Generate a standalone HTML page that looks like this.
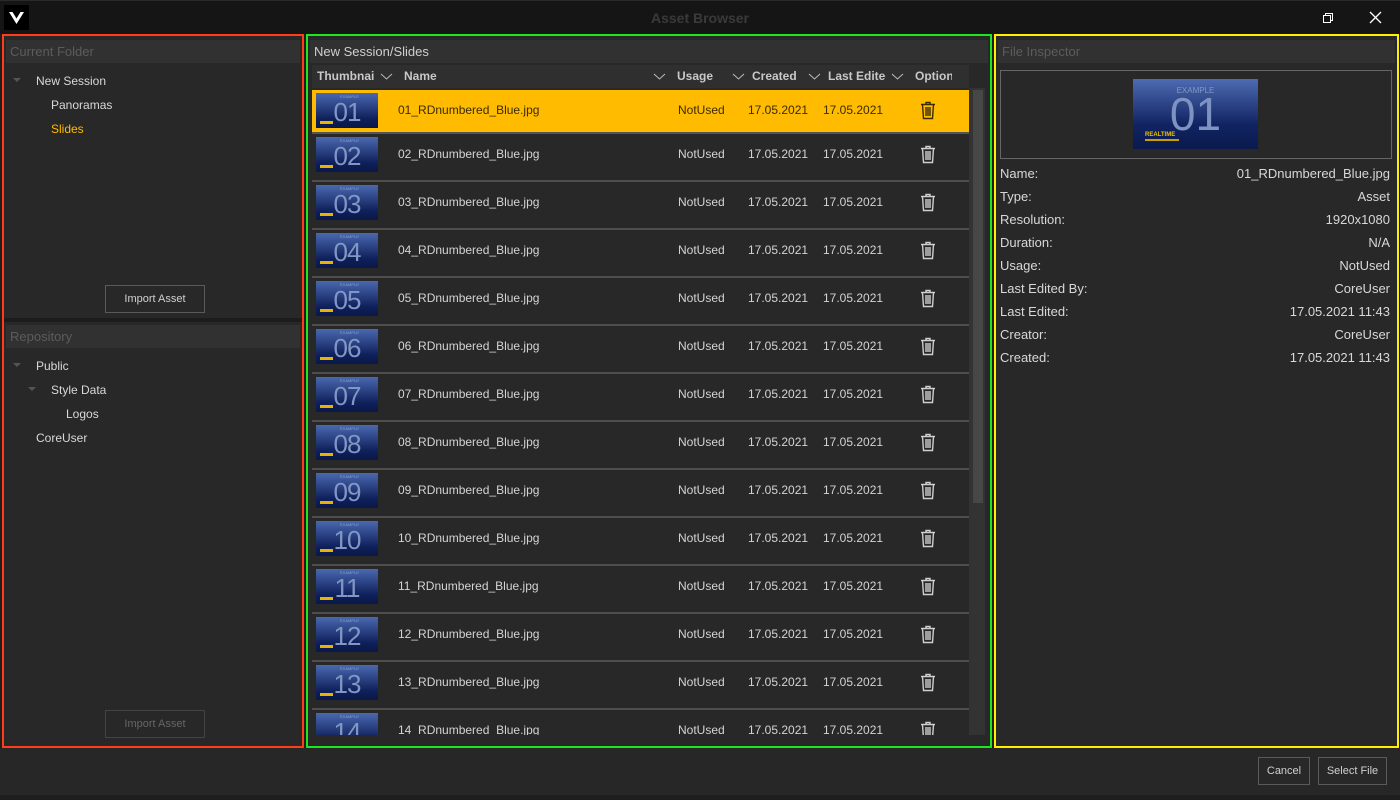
<!DOCTYPE html>
<html><head><meta charset="utf-8"><style>
*{margin:0;padding:0;box-sizing:border-box}
body{width:1400px;height:800px;background:#1e1e1e;font-family:"Liberation Sans",sans-serif;font-size:12px;color:#d8d8d8;position:relative;overflow:hidden}
.a{position:absolute}
.title{left:0;top:0;width:1400px;height:34px;background:#151515;border-top:1px solid #2a2a2a}
.hdr{height:23px;background:#313131;color:#5c5c5c;font-size:13px;line-height:23px;padding-left:4px}
.panel{background:#282828}
.btn{border:1px solid #5a5a5a;color:#d0d0d0;text-align:center;font-size:11px;background:#282828}
.row{position:absolute;left:312px;width:657px;height:48px;border-bottom:2px solid #4e4e4e}
.row .t{position:absolute;left:4px;top:3px;width:62px;height:35px;background:linear-gradient(#4a68b0,#0e1f5a 75%,#0a1848);overflow:hidden}
.row .t b{position:absolute;left:0;width:100%;top:6px;text-align:center;font-weight:normal;font-size:26px;color:#8196c4;letter-spacing:-1px;line-height:26px}
.row .t i{position:absolute;left:24px;top:1px;font-style:normal;font-size:4px;color:#8da0cc}
.row .t u{position:absolute;left:4px;top:28px;width:13px;height:3px;background:#e8b400;text-decoration:none}
.row span{position:absolute;top:13px;font-size:12px;color:#d4d4d4}
.row svg{position:absolute;left:608px;top:11px}
.sel{background:#ffbb00}
.sel span{color:#3a2c00}
.prop{position:absolute;left:1000px;width:390px;font-size:13px;color:#d8d8d8}
.prop em{position:absolute;right:0;font-style:normal}
.ch{position:absolute;top:8px}
</style></head><body>
<div class="a title">
 <div class="a" style="left:4px;top:4px;width:25px;height:25px;background:#000">
  <svg width="25" height="25"><path d="M5 7 L12.5 19 L20 7 L16.5 7 L12.5 13.5 L8.5 7 Z" fill="#fff"/></svg>
 </div>
 <div class="a" style="left:0;width:1400px;top:9px;text-align:center;font-weight:bold;font-size:14px;color:#3a3a3a">Asset Browser</div>
 <svg class="a" style="left:1322px;top:11px" width="12" height="12"><rect x="1.5" y="3.5" width="7" height="7" fill="none" stroke="#fff"/><path d="M3.5 3.5V1.5h7v7h-2" fill="none" stroke="#fff"/></svg>
 <svg class="a" style="left:1369px;top:10px" width="13" height="13"><path d="M1 1L12 12M12 1L1 12" stroke="#fff" stroke-width="1.3"/></svg>
</div>
<div class="a" style="left:0;top:748px;width:1400px;height:47px;background:#272727"></div>
<div class="a btn" style="left:1258px;top:757px;width:52px;height:28px;line-height:26px">Cancel</div>
<div class="a btn" style="left:1318px;top:757px;width:69px;height:28px;line-height:26px">Select File</div>

<div class="a panel" style="left:2px;top:34px;width:302px;height:714px;border:2px solid #ff3d1a">
 <div class="a hdr" style="left:2px;top:4px;width:294px">Current Folder</div>
 <div class="a" style="left:9px;top:42px;border:4px solid transparent;border-top:4px solid #555"></div>
 <div class="a" style="left:32px;top:38px;font-size:12px">New Session</div>
 <div class="a" style="left:47px;top:62px">Panoramas</div>
 <div class="a" style="left:47px;top:86px;color:#ffbb00">Slides</div>
 <div class="a btn" style="left:101px;top:249px;width:100px;height:28px;line-height:26px">Import Asset</div>
 <div class="a" style="left:0;top:282px;width:298px;height:4px;background:#1c1c1c"></div>
 <div class="a hdr" style="left:2px;top:289px;width:294px">Repository</div>
 <div class="a" style="left:9px;top:327px;border:4px solid transparent;border-top:4px solid #555"></div>
 <div class="a" style="left:32px;top:323px">Public</div>
 <div class="a" style="left:24px;top:351px;border:4px solid transparent;border-top:4px solid #555"></div>
 <div class="a" style="left:47px;top:347px">Style Data</div>
 <div class="a" style="left:62px;top:371px">Logos</div>
 <div class="a" style="left:32px;top:395px">CoreUser</div>
 <div class="a btn" style="left:101px;top:674px;width:100px;height:28px;line-height:26px;color:#666;border-color:#444">Import Asset</div>
</div>

<div class="a panel" style="left:306px;top:34px;width:686px;height:714px;border:2px solid #1ee61e"></div>
<div class="a hdr" style="left:310px;top:40px;width:678px;color:#cfcfcf;padding-left:4px">New Session/Slides</div>
<div class="a" style="left:312px;top:65px;width:657px;height:23px;background:#2f2f2f;color:#c8c8c8;font-weight:bold;font-size:12px;line-height:23px">
 <span class="a" style="left:5px">Thumbnai</span><svg class="ch" style="left:68px" width="13" height="7"><path d="M1 1l5.5 5 5.5-5" fill="none" stroke="#bbb"/></svg>
 <span class="a" style="left:92px">Name</span><svg class="ch" style="left:341px" width="13" height="7"><path d="M1 1l5.5 5 5.5-5" fill="none" stroke="#bbb"/></svg>
 <span class="a" style="left:365px">Usage</span><svg class="ch" style="left:420px" width="13" height="7"><path d="M1 1l5.5 5 5.5-5" fill="none" stroke="#bbb"/></svg>
 <span class="a" style="left:440px">Created</span><svg class="ch" style="left:496px" width="13" height="7"><path d="M1 1l5.5 5 5.5-5" fill="none" stroke="#bbb"/></svg>
 <span class="a" style="left:516px;width:58px;overflow:hidden;white-space:nowrap">Last Edited</span><svg class="ch" style="left:579px" width="13" height="7"><path d="M1 1l5.5 5 5.5-5" fill="none" stroke="#bbb"/></svg>
 <span class="a" style="left:603px;width:37px;overflow:hidden;white-space:nowrap">Options</span>
</div>
<div class="a" style="left:969px;top:88px;width:16px;height:647px;background:#333"></div>
<div class="a" style="left:973px;top:90px;width:10px;height:413px;background:#474747"></div>
<div class="a" style="left:312px;top:90px;width:657px;height:645px;overflow:hidden">
<div style="position:relative;left:-312px;top:-90px">
<div class="row sel" style="top:90px;border-bottom-color:#555;height:44px"><div class="t"><i>EXAMPLE</i><b>01</b><u></u></div><span style="left:86px">01_RDnumbered_Blue.jpg</span><span style="left:366px">NotUsed</span><span style="left:436px">17.05.2021</span><span style="left:511px">17.05.2021</span><svg width="16" height="19"><path d="M1 3.5h14M6 3.5V1.5h4v2M2.5 3.5l1 14h9l1-14M6 6v9M8 6v9M10 6v9" fill="none" stroke="#3a2c00" stroke-width="1.4"/></svg></div>
<div class="row" style="top:134px"><div class="t"><i>EXAMPLE</i><b>02</b><u></u></div><span style="left:86px">02_RDnumbered_Blue.jpg</span><span style="left:366px">NotUsed</span><span style="left:436px">17.05.2021</span><span style="left:511px">17.05.2021</span><svg width="16" height="19"><path d="M1 3.5h14M6 3.5V1.5h4v2M2.5 3.5l1 14h9l1-14M6 6v9M8 6v9M10 6v9" fill="none" stroke="#cfcfcf" stroke-width="1.4"/></svg></div>
<div class="row" style="top:182px"><div class="t"><i>EXAMPLE</i><b>03</b><u></u></div><span style="left:86px">03_RDnumbered_Blue.jpg</span><span style="left:366px">NotUsed</span><span style="left:436px">17.05.2021</span><span style="left:511px">17.05.2021</span><svg width="16" height="19"><path d="M1 3.5h14M6 3.5V1.5h4v2M2.5 3.5l1 14h9l1-14M6 6v9M8 6v9M10 6v9" fill="none" stroke="#cfcfcf" stroke-width="1.4"/></svg></div>
<div class="row" style="top:230px"><div class="t"><i>EXAMPLE</i><b>04</b><u></u></div><span style="left:86px">04_RDnumbered_Blue.jpg</span><span style="left:366px">NotUsed</span><span style="left:436px">17.05.2021</span><span style="left:511px">17.05.2021</span><svg width="16" height="19"><path d="M1 3.5h14M6 3.5V1.5h4v2M2.5 3.5l1 14h9l1-14M6 6v9M8 6v9M10 6v9" fill="none" stroke="#cfcfcf" stroke-width="1.4"/></svg></div>
<div class="row" style="top:278px"><div class="t"><i>EXAMPLE</i><b>05</b><u></u></div><span style="left:86px">05_RDnumbered_Blue.jpg</span><span style="left:366px">NotUsed</span><span style="left:436px">17.05.2021</span><span style="left:511px">17.05.2021</span><svg width="16" height="19"><path d="M1 3.5h14M6 3.5V1.5h4v2M2.5 3.5l1 14h9l1-14M6 6v9M8 6v9M10 6v9" fill="none" stroke="#cfcfcf" stroke-width="1.4"/></svg></div>
<div class="row" style="top:326px"><div class="t"><i>EXAMPLE</i><b>06</b><u></u></div><span style="left:86px">06_RDnumbered_Blue.jpg</span><span style="left:366px">NotUsed</span><span style="left:436px">17.05.2021</span><span style="left:511px">17.05.2021</span><svg width="16" height="19"><path d="M1 3.5h14M6 3.5V1.5h4v2M2.5 3.5l1 14h9l1-14M6 6v9M8 6v9M10 6v9" fill="none" stroke="#cfcfcf" stroke-width="1.4"/></svg></div>
<div class="row" style="top:374px"><div class="t"><i>EXAMPLE</i><b>07</b><u></u></div><span style="left:86px">07_RDnumbered_Blue.jpg</span><span style="left:366px">NotUsed</span><span style="left:436px">17.05.2021</span><span style="left:511px">17.05.2021</span><svg width="16" height="19"><path d="M1 3.5h14M6 3.5V1.5h4v2M2.5 3.5l1 14h9l1-14M6 6v9M8 6v9M10 6v9" fill="none" stroke="#cfcfcf" stroke-width="1.4"/></svg></div>
<div class="row" style="top:422px"><div class="t"><i>EXAMPLE</i><b>08</b><u></u></div><span style="left:86px">08_RDnumbered_Blue.jpg</span><span style="left:366px">NotUsed</span><span style="left:436px">17.05.2021</span><span style="left:511px">17.05.2021</span><svg width="16" height="19"><path d="M1 3.5h14M6 3.5V1.5h4v2M2.5 3.5l1 14h9l1-14M6 6v9M8 6v9M10 6v9" fill="none" stroke="#cfcfcf" stroke-width="1.4"/></svg></div>
<div class="row" style="top:470px"><div class="t"><i>EXAMPLE</i><b>09</b><u></u></div><span style="left:86px">09_RDnumbered_Blue.jpg</span><span style="left:366px">NotUsed</span><span style="left:436px">17.05.2021</span><span style="left:511px">17.05.2021</span><svg width="16" height="19"><path d="M1 3.5h14M6 3.5V1.5h4v2M2.5 3.5l1 14h9l1-14M6 6v9M8 6v9M10 6v9" fill="none" stroke="#cfcfcf" stroke-width="1.4"/></svg></div>
<div class="row" style="top:518px"><div class="t"><i>EXAMPLE</i><b>10</b><u></u></div><span style="left:86px">10_RDnumbered_Blue.jpg</span><span style="left:366px">NotUsed</span><span style="left:436px">17.05.2021</span><span style="left:511px">17.05.2021</span><svg width="16" height="19"><path d="M1 3.5h14M6 3.5V1.5h4v2M2.5 3.5l1 14h9l1-14M6 6v9M8 6v9M10 6v9" fill="none" stroke="#cfcfcf" stroke-width="1.4"/></svg></div>
<div class="row" style="top:566px"><div class="t"><i>EXAMPLE</i><b>11</b><u></u></div><span style="left:86px">11_RDnumbered_Blue.jpg</span><span style="left:366px">NotUsed</span><span style="left:436px">17.05.2021</span><span style="left:511px">17.05.2021</span><svg width="16" height="19"><path d="M1 3.5h14M6 3.5V1.5h4v2M2.5 3.5l1 14h9l1-14M6 6v9M8 6v9M10 6v9" fill="none" stroke="#cfcfcf" stroke-width="1.4"/></svg></div>
<div class="row" style="top:614px"><div class="t"><i>EXAMPLE</i><b>12</b><u></u></div><span style="left:86px">12_RDnumbered_Blue.jpg</span><span style="left:366px">NotUsed</span><span style="left:436px">17.05.2021</span><span style="left:511px">17.05.2021</span><svg width="16" height="19"><path d="M1 3.5h14M6 3.5V1.5h4v2M2.5 3.5l1 14h9l1-14M6 6v9M8 6v9M10 6v9" fill="none" stroke="#cfcfcf" stroke-width="1.4"/></svg></div>
<div class="row" style="top:662px"><div class="t"><i>EXAMPLE</i><b>13</b><u></u></div><span style="left:86px">13_RDnumbered_Blue.jpg</span><span style="left:366px">NotUsed</span><span style="left:436px">17.05.2021</span><span style="left:511px">17.05.2021</span><svg width="16" height="19"><path d="M1 3.5h14M6 3.5V1.5h4v2M2.5 3.5l1 14h9l1-14M6 6v9M8 6v9M10 6v9" fill="none" stroke="#cfcfcf" stroke-width="1.4"/></svg></div>
<div class="row" style="top:710px"><div class="t"><i>EXAMPLE</i><b>14</b><u></u></div><span style="left:86px">14_RDnumbered_Blue.jpg</span><span style="left:366px">NotUsed</span><span style="left:436px">17.05.2021</span><span style="left:511px">17.05.2021</span><svg width="16" height="19"><path d="M1 3.5h14M6 3.5V1.5h4v2M2.5 3.5l1 14h9l1-14M6 6v9M8 6v9M10 6v9" fill="none" stroke="#cfcfcf" stroke-width="1.4"/></svg></div>
</div></div>

<div class="a panel" style="left:994px;top:34px;width:405px;height:714px;border:2px solid #ffee00">
 <div class="a hdr" style="left:2px;top:4px;width:397px">File Inspector</div>
 <div class="a" style="left:4px;top:34px;width:392px;height:89px;border:1px solid #666"></div>
 <div class="a" style="left:137px;top:43px;width:125px;height:70px;background:linear-gradient(#4e6bb2,#112462 65%,#0a1a4e);overflow:hidden">
  <div class="a" style="left:0;width:125px;top:7px;text-align:center;font-size:8px;color:#8596c4">EXAMPLE</div>
  <div class="a" style="left:0;width:125px;top:12px;text-align:center;font-size:46px;line-height:46px;color:#7f93c2">01</div>
  <div class="a" style="left:12px;top:53px;font-size:6px;font-weight:bold;color:#f0c000">REALTIME</div>
  <div class="a" style="left:12px;top:60px;width:34px;height:2px;background:#c8a000"></div>
 </div>
</div>
<div class="prop" style="top:166px">Name:<em>01_RDnumbered_Blue.jpg</em></div>
<div class="prop" style="top:189px">Type:<em>Asset</em></div>
<div class="prop" style="top:212px">Resolution:<em>1920x1080</em></div>
<div class="prop" style="top:235px">Duration:<em>N/A</em></div>
<div class="prop" style="top:258px">Usage:<em>NotUsed</em></div>
<div class="prop" style="top:281px">Last Edited By:<em>CoreUser</em></div>
<div class="prop" style="top:304px">Last Edited:<em>17.05.2021 11:43</em></div>
<div class="prop" style="top:327px">Creator:<em>CoreUser</em></div>
<div class="prop" style="top:350px">Created:<em>17.05.2021 11:43</em></div>
</body></html>
